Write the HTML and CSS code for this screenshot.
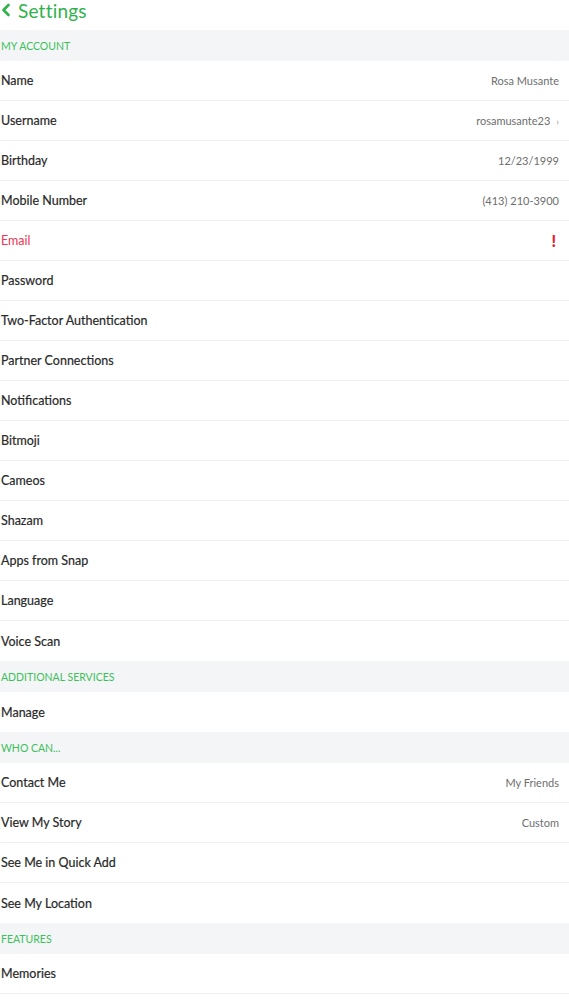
FILE: index.html
```html
<!DOCTYPE html>
<html lang="en">

<head>
    <meta charset="UTF-8">
    <meta name="viewport" content="width=device-width, initial-scale=1.0">
    <title>Settings</title>
    <link rel="stylesheet" href="styles.css">
</head>

<body>
    <header class="top-bar">
        <svg class="back" width="10" height="14" viewBox="0 0 10 14">
            <path d="M7.5 2 L2.5 7 L7.5 12" fill="none" stroke="#2fb24c" stroke-width="2.6" stroke-linecap="round"
                stroke-linejoin="round" />
        </svg>
        <span class="title">Settings</span>
    </header>

    <div class="section">My Account</div>
    <div class="row"><span>Name</span><span class="value">Rosa Musante</span></div>
    <div class="row"><span>Username</span><span class="value">rosamusante23 <i class="chev">›</i></span></div>
    <div class="row"><span>Birthday</span><span class="value">12/23/1999</span></div>
    <div class="row"><span>Mobile Number</span><span class="value">(413) 210-3900</span></div>
    <div class="row alert"><span>Email</span><span class="bang">!</span></div>
    <div class="row"><span>Password</span></div>
    <div class="row"><span>Two-Factor Authentication</span></div>
    <div class="row"><span>Partner Connections</span></div>
    <div class="row"><span>Notifications</span></div>
    <div class="row"><span>Bitmoji</span></div>
    <div class="row"><span>Cameos</span></div>
    <div class="row"><span>Shazam</span></div>
    <div class="row"><span>Apps from Snap</span></div>
    <div class="row"><span>Language</span></div>
    <div class="row last"><span>Voice Scan</span></div>

    <div class="section">Additional Services</div>
    <div class="row last"><span>Manage</span></div>

    <div class="section">Who Can...</div>
    <div class="row"><span>Contact Me</span><span class="value">My Friends</span></div>
    <div class="row"><span>View My Story</span><span class="value">Custom</span></div>
    <div class="row"><span>See Me in Quick Add</span></div>
    <div class="row last"><span>See My Location</span></div>

    <div class="section">Features</div>
    <div class="row"><span>Memories</span></div>
</body>

</html>
```

FILE: styles.css
```css
body {
    margin: 0;
    background: #fff;
    font-family: Lato, "Noto Sans", sans-serif;
    color: #2a2a2a;
}

.top-bar {
    height: 30px;
    display: flex;
    align-items: flex-start;
    gap: 7px;
    padding-left: 1px;
    box-sizing: border-box;
}

.top-bar .back {
    margin-top: 3px;
}

.top-bar .title {
    font-size: 19px;
    line-height: 21px;
    color: #2fb24c;
    letter-spacing: .2px;
}

.section {
    height: 31px;
    display: flex;
    align-items: center;
    padding-left: 1px;
    background: #f4f5f7;
    color: #3cc05a;
    font-size: 10.5px;
    text-transform: uppercase;
}

.row {
    height: 39px;
    display: flex;
    align-items: center;
    justify-content: space-between;
    padding: 0 10px 0 1px;
    border-bottom: 1px solid #f0f0f2;
    font-size: 12.5px;
    -webkit-text-stroke: .2px #2a2a2a;
}

.row.last {
    border-bottom: none;
    height: 40px;
}

.row .value {
    font-size: 11px;
    color: #6e6e6e;
    -webkit-text-stroke: 0;
}

.chev {
    font-style: normal;
    color: #999;
    font-size: 10px;
    margin-left: 3px;
}

.alert {
    color: #ee3553;
    -webkit-text-stroke: 0;
}

.alert .bang {
    color: #e4202e;
    font-weight: 900;
    font-size: 16px;
    margin-right: 3px;
}
```
